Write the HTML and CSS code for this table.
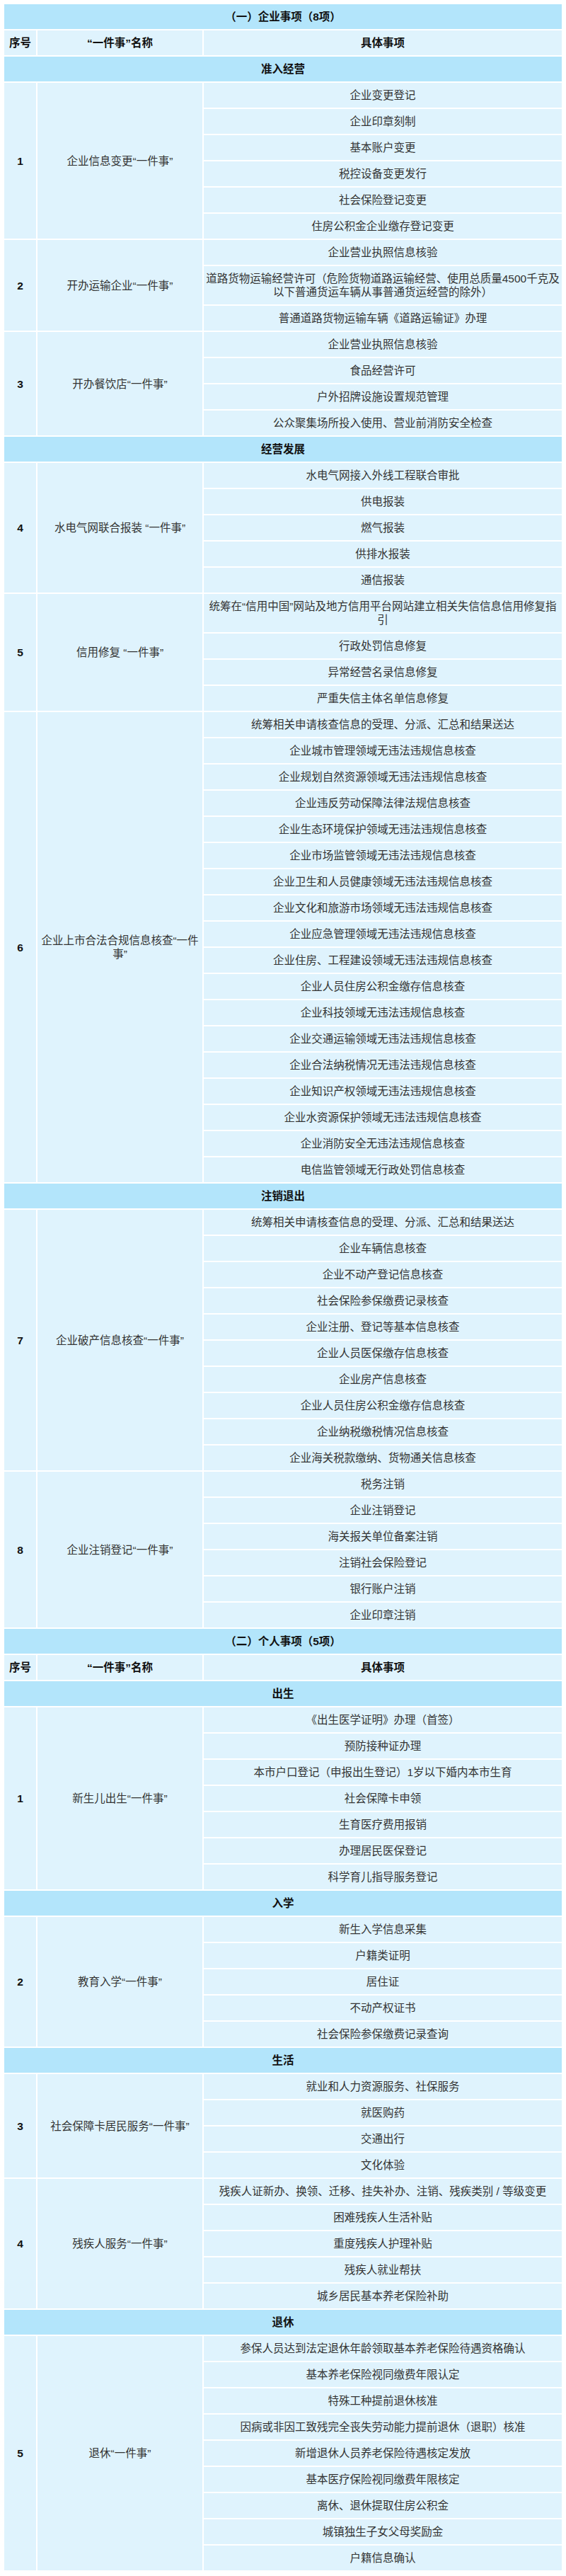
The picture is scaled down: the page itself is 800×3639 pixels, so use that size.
FILE: index.html
```html
<!DOCTYPE html>
<html lang="zh-CN">
<head>
<meta charset="utf-8">
<title>“一件事”事项清单</title>
<link rel="stylesheet" href="styles.css">
</head>
<body>
<table class="matters">
<colgroup><col class="c-no"><col class="c-name"><col class="c-item"></colgroup>
<tbody>
<tr class="title"><td colspan="3">（一）企业事项（8项）</td></tr>
<tr class="head"><th>序号</th><th>“一件事”名称</th><th>具体事项</th></tr>
<tr class="cat"><td colspan="3">准入经营</td></tr>

<tr><td class="no" rowspan="6">1</td><td class="name" rowspan="6">企业信息变更“一件事”</td><td>企业变更登记</td></tr>
<tr><td>企业印章刻制</td></tr>
<tr><td>基本账户变更</td></tr>
<tr><td>税控设备变更发行</td></tr>
<tr><td>社会保险登记变更</td></tr>
<tr><td>住房公积金企业缴存登记变更</td></tr>

<tr><td class="no" rowspan="3">2</td><td class="name" rowspan="3">开办运输企业“一件事”</td><td>企业营业执照信息核验</td></tr>
<tr><td>道路货物运输经营许可（危险货物道路运输经营、使用总质量4500千克及以下普通货运车辆从事普通货运经营的除外）</td></tr>
<tr><td>普通道路货物运输车辆《道路运输证》办理</td></tr>

<tr><td class="no" rowspan="4">3</td><td class="name" rowspan="4">开办餐饮店“一件事”</td><td>企业营业执照信息核验</td></tr>
<tr><td>食品经营许可</td></tr>
<tr><td>户外招牌设施设置规范管理</td></tr>
<tr><td>公众聚集场所投入使用、营业前消防安全检查</td></tr>

<tr class="cat"><td colspan="3">经营发展</td></tr>

<tr><td class="no" rowspan="5">4</td><td class="name" rowspan="5">水电气网联合报装 “一件事”</td><td>水电气网接入外线工程联合审批</td></tr>
<tr><td>供电报装</td></tr>
<tr><td>燃气报装</td></tr>
<tr><td>供排水报装</td></tr>
<tr><td>通信报装</td></tr>

<tr><td class="no" rowspan="4">5</td><td class="name" rowspan="4">信用修复 “一件事”</td><td>统筹在“信用中国”网站及地方信用平台网站建立相关失信信息信用修复指引</td></tr>
<tr><td>行政处罚信息修复</td></tr>
<tr><td>异常经营名录信息修复</td></tr>
<tr><td>严重失信主体名单信息修复</td></tr>

<tr><td class="no" rowspan="18">6</td><td class="name" rowspan="18">企业上市合法合规信息核查“一件事”</td><td>统筹相关申请核查信息的受理、分派、汇总和结果送达</td></tr>
<tr><td>企业城市管理领域无违法违规信息核查</td></tr>
<tr><td>企业规划自然资源领域无违法违规信息核查</td></tr>
<tr><td>企业违反劳动保障法律法规信息核查</td></tr>
<tr><td>企业生态环境保护领域无违法违规信息核查</td></tr>
<tr><td>企业市场监管领域无违法违规信息核查</td></tr>
<tr><td>企业卫生和人员健康领域无违法违规信息核查</td></tr>
<tr><td>企业文化和旅游市场领域无违法违规信息核查</td></tr>
<tr><td>企业应急管理领域无违法违规信息核查</td></tr>
<tr><td>企业住房、工程建设领域无违法违规信息核查</td></tr>
<tr><td>企业人员住房公积金缴存信息核查</td></tr>
<tr><td>企业科技领域无违法违规信息核查</td></tr>
<tr><td>企业交通运输领域无违法违规信息核查</td></tr>
<tr><td>企业合法纳税情况无违法违规信息核查</td></tr>
<tr><td>企业知识产权领域无违法违规信息核查</td></tr>
<tr><td>企业水资源保护领域无违法违规信息核查</td></tr>
<tr><td>企业消防安全无违法违规信息核查</td></tr>
<tr><td>电信监管领域无行政处罚信息核查</td></tr>

<tr class="cat"><td colspan="3">注销退出</td></tr>

<tr><td class="no" rowspan="10">7</td><td class="name" rowspan="10">企业破产信息核查“一件事”</td><td>统筹相关申请核查信息的受理、分派、汇总和结果送达</td></tr>
<tr><td>企业车辆信息核查</td></tr>
<tr><td>企业不动产登记信息核查</td></tr>
<tr><td>社会保险参保缴费记录核查</td></tr>
<tr><td>企业注册、登记等基本信息核查</td></tr>
<tr><td>企业人员医保缴存信息核查</td></tr>
<tr><td>企业房产信息核查</td></tr>
<tr><td>企业人员住房公积金缴存信息核查</td></tr>
<tr><td>企业纳税缴税情况信息核查</td></tr>
<tr><td>企业海关税款缴纳、货物通关信息核查</td></tr>

<tr><td class="no" rowspan="6">8</td><td class="name" rowspan="6">企业注销登记“一件事”</td><td>税务注销</td></tr>
<tr><td>企业注销登记</td></tr>
<tr><td>海关报关单位备案注销</td></tr>
<tr><td>注销社会保险登记</td></tr>
<tr><td>银行账户注销</td></tr>
<tr><td>企业印章注销</td></tr>

<tr class="title"><td colspan="3">（二）个人事项（5项）</td></tr>
<tr class="head"><th>序号</th><th>“一件事”名称</th><th>具体事项</th></tr>
<tr class="cat"><td colspan="3">出生</td></tr>

<tr><td class="no" rowspan="7">1</td><td class="name" rowspan="7">新生儿出生“一件事”</td><td>《出生医学证明》办理（首签）</td></tr>
<tr><td>预防接种证办理</td></tr>
<tr><td>本市户口登记（申报出生登记）1岁以下婚内本市生育</td></tr>
<tr><td>社会保障卡申领</td></tr>
<tr><td>生育医疗费用报销</td></tr>
<tr><td>办理居民医保登记</td></tr>
<tr><td>科学育儿指导服务登记</td></tr>

<tr class="cat"><td colspan="3">入学</td></tr>

<tr><td class="no" rowspan="5">2</td><td class="name" rowspan="5">教育入学“一件事”</td><td>新生入学信息采集</td></tr>
<tr><td>户籍类证明</td></tr>
<tr><td>居住证</td></tr>
<tr><td>不动产权证书</td></tr>
<tr><td>社会保险参保缴费记录查询</td></tr>

<tr class="cat"><td colspan="3">生活</td></tr>

<tr><td class="no" rowspan="4">3</td><td class="name" rowspan="4">社会保障卡居民服务“一件事”</td><td>就业和人力资源服务、社保服务</td></tr>
<tr><td>就医购药</td></tr>
<tr><td>交通出行</td></tr>
<tr><td>文化体验</td></tr>

<tr><td class="no" rowspan="5">4</td><td class="name" rowspan="5">残疾人服务“一件事”</td><td>残疾人证新办、换领、迁移、挂失补办、注销、残疾类别 / 等级变更</td></tr>
<tr><td>困难残疾人生活补贴</td></tr>
<tr><td>重度残疾人护理补贴</td></tr>
<tr><td>残疾人就业帮扶</td></tr>
<tr><td>城乡居民基本养老保险补助</td></tr>

<tr class="cat"><td colspan="3">退休</td></tr>

<tr><td class="no" rowspan="9">5</td><td class="name" rowspan="9">退休“一件事”</td><td>参保人员达到法定退休年龄领取基本养老保险待遇资格确认</td></tr>
<tr><td>基本养老保险视同缴费年限认定</td></tr>
<tr><td>特殊工种提前退休核准</td></tr>
<tr><td>因病或非因工致残完全丧失劳动能力提前退休（退职）核准</td></tr>
<tr><td>新增退休人员养老保险待遇核定发放</td></tr>
<tr><td>基本医疗保险视同缴费年限核定</td></tr>
<tr><td>离休、退休提取住房公积金</td></tr>
<tr><td>城镇独生子女父母奖励金</td></tr>
<tr><td>户籍信息确认</td></tr>
</tbody>
</table>
</body>
</html>
```
FILE: styles.css
```css
html, body {
  background: #ffffff;
}

body {
  margin: 4px;
  font-family: "Liberation Sans", "Noto Sans CJK SC", sans-serif;
}

.matters {
  width: 100%;
  table-layout: fixed;
  border-collapse: separate;
  border-spacing: 2px;
  font-size: 15.5px;
  line-height: 19px;
  color: #333333;
}

.c-no {
  width: 45px;
}

.c-name {
  width: 233px;
}

.matters td,
.matters th {
  padding: 8px 2px;
  text-align: center;
  vertical-align: middle;
  background: #dff3fd;
  font-weight: normal;
}

.matters .title td,
.matters .cat td {
  background: #b3e5fb;
  font-weight: bold;
  color: #111111;
}

.matters .head th {
  font-weight: bold;
  color: #111111;
}

.matters .no {
  font-weight: bold;
  color: #111111;
}
```
